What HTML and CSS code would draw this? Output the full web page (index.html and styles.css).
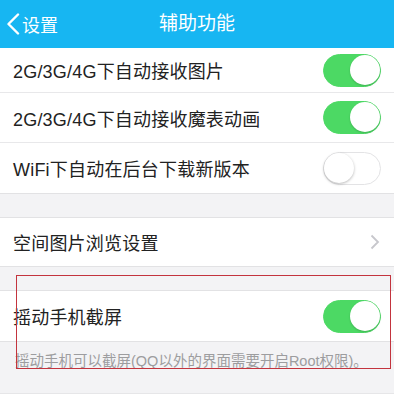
FILE: index.html
```html
<!DOCTYPE html>
<html lang="zh">
<head>
<meta charset="utf-8">
<link rel="stylesheet" href="styles.css">
</head>
<body>
<div class="page">
  <header class="nav">
    <div class="back">
      <svg class="back-icon" width="14" height="22" viewBox="0 0 14 22"><path d="M12 1.5 L2.5 11 L12 20.5" fill="none" stroke="#fff" stroke-width="2.4" stroke-linecap="round" stroke-linejoin="round"/></svg>
      <span>设置</span>
    </div>
    <div class="title">辅助功能</div>
  </header>

  <div class="group">
    <div class="row first"><span class="label">2G/3G/4G下自动接收图片</span><span class="switch on"></span></div>
    <div class="row"><span class="label">2G/3G/4G下自动接收魔表动画</span><span class="switch on"></span></div>
    <div class="row"><span class="label">WiFi下自动在后台下载新版本</span><span class="switch"></span></div>
  </div>

  <div class="gap"></div>

  <div class="group">
    <div class="row short"><span class="label">空间图片浏览设置</span>
      <svg class="chev" width="10" height="16" viewBox="0 0 10 16"><path d="M1.5 1.5 L8 8 L1.5 14.5" fill="none" stroke="#c7c7cc" stroke-width="1.8"/></svg>
    </div>
  </div>

  <div class="gap"></div>

  <div class="group">
    <div class="row"><span class="label">摇动手机截屏</span><span class="switch on"></span></div>
  </div>
  <div class="note">摇动手机可以截屏(QQ以外的界面需要开启Root权限)。</div>
  <div class="bottom-line"></div>

  <div class="highlight"></div>
</div>
</body>
</html>
```

FILE: styles.css
```css
* { box-sizing: border-box; }
html, body { margin: 0; padding: 0; }
body {
  width: 394px;
  height: 394px;
  overflow: hidden;
  background: #f3f3f5;
  font-family: "Liberation Sans", "Noto Sans CJK SC", sans-serif;
  color: #222;
}
.page { position: relative; width: 394px; height: 394px; }
.nav {
  height: 48px;
  background: #17b6f2;
  color: #fff;
  display: flex;
  align-items: center;
  position: relative;
}
.back {
  display: flex;
  align-items: center;
  padding-left: 6px;
  font-size: 18px;
  gap: 2px;
}
.back-icon { display: block; }
.title {
  position: absolute;
  left: 0; right: 0; top: 0;
  height: 48px;
  line-height: 48px;
  text-align: center;
  font-size: 19px;
  pointer-events: none;
}
.group {
  background: #fff;
  border-bottom: 1px solid #e2e2e4;
}
.gap + .group { border-top: 1px solid #e2e2e4; }
.row {
  height: 50px;
  display: flex;
  align-items: center;
  justify-content: space-between;
  padding: 0 13px 0 13px;
  border-bottom: 1px solid #e8e8ea;
}
.row:last-child { border-bottom: none; }
.row.first { height: 45px; }
.row.short { height: 48px; padding-right: 14px; }
.label { font-size: 18px; letter-spacing: 0.2px; }
.gap { height: 23px; }
.switch {
  width: 58px;
  height: 33px;
  border-radius: 17px;
  background: #fff;
  border: 1.5px solid #e3e3e5;
  position: relative;
  flex: none;
}
.switch::after {
  content: "";
  position: absolute;
  top: 0; left: 0;
  width: 30px; height: 30px;
  border-radius: 50%;
  background: #fff;
  box-shadow: 0 1px 3px rgba(0,0,0,0.28);
}
.switch.on { background: #4cd964; border-color: #4cd964; }
.switch.on::after { left: auto; right: 0; box-shadow: 0 1px 2px rgba(0,0,0,0.18); }
.chev { display: block; }
.note {
  height: 51px;
  padding: 8px 15px 0;
  font-size: 14.5px;
  color: #9d9d9f;
  line-height: 22px;
}
.bottom-line { border-top: 1px solid #e6e6e8; }
.highlight {
  position: absolute;
  left: 16px;
  top: 275px;
  width: 375px;
  height: 94px;
  border: 1px solid #c3343e;
}
```
